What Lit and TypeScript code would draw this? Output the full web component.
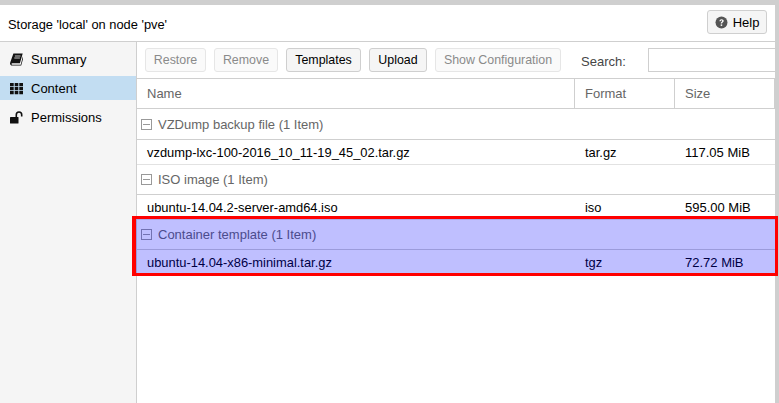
import { LitElement, html, css } from "lit";
import { customElement } from "lit/decorators.js";

const groups = [
  { name: "VZDump backup file (1 Item)", file: "vzdump-lxc-100-2016_10_11-19_45_02.tar.gz", fmt: "tar.gz", size: "117.05 MiB" },
  { name: "ISO image (1 Item)", file: "ubuntu-14.04.2-server-amd64.iso", fmt: "iso", size: "595.00 MiB" },
  { name: "Container template (1 Item)", file: "ubuntu-14.04-x86-minimal.tar.gz", fmt: "tgz", size: "72.72 MiB" },
];

@customElement("app-root")
export class AppRoot extends LitElement {
  static styles = css`
    :host { display: block; width: 779px; height: 403px; background: #cfcfcf; font: 13px "Liberation Sans", Arial, sans-serif; color: #000; overflow: hidden; }
    .win { position: relative; margin: 5px 4px 0 0; height: 398px; background: #fff; display: flex; flex-direction: column; }
    .title { height: 36px; flex: none; display: flex; align-items: center; justify-content: space-between; padding: 0 8px; border-bottom: 1px solid #cfcfcf; }
    .title .t { position: relative; top: 1px; font-size: 12.85px; }
    .btn { box-sizing: border-box; height: 24px; display: flex; align-items: center; justify-content: center; border: 1px solid #cfcfcf; border-radius: 3px; background: #f5f5f5; white-space: nowrap; font-size: 12.4px; }
    .btn.off { color: #8a8a8a; background: #fafafa; border-color: #e6e6e6; }
    .help { width: 60px; gap: 5px; margin-top: -2px; font-size: 13px; }
    .body { flex: 1; display: flex; min-height: 0; }
    .side { width: 136px; flex: none; border-right: 1px solid #cfcfcf; background: #f5f5f5; }
    .nav { height: 24px; margin-bottom: 5px; display: flex; align-items: center; padding-left: 10px; gap: 8px; }
    .nav svg { width: 13px; height: 13px; flex: none; }
    .nav.first { margin-top: 5px; }
    .nav.on { background: #c2ddf2; }
    .main { flex: 1; min-width: 0; }
    .bar { height: 37px; box-sizing: border-box; display: flex; align-items: center; padding-left: 8px; gap: 8px; border-bottom: 1px solid #cfcfcf; }
    .b1 { width: 61px; } .b2 { width: 64px; } .b3 { width: 75px; } .b4 { width: 58px; } .b5 { width: 126px; }
    .lbl { color: #464646; margin-left: 12px; position: relative; top: 1px; }
    .search { box-sizing: border-box; height: 24px; flex: 1; margin-left: 14px; border: 1px solid #cfcfcf; border-right: 0; background: #fff; }
    .cols { display: grid; grid-template-columns: 438px 100px 1fr; height: 29px; border-bottom: 1px solid #cfcfcf; color: #666; }
    .cols div { display: flex; align-items: center; padding-left: 10px; border-right: 1px solid #cfcfcf; }
    .group { height: 30px; box-sizing: border-box; display: flex; align-items: center; padding-left: 4px; gap: 6px; color: #666; border-bottom: 1px solid #cfcfcf; }
    .group.first { margin-top: 1px; }
    .box { box-sizing: border-box; width: 11px; height: 11px; border: 1px solid #999; position: relative; flex: none; }
    .box::after { content: ""; position: absolute; left: 1px; right: 1px; top: 4px; height: 1px; background: #999; }
    .row { display: grid; grid-template-columns: 438px 100px 1fr; height: 25px; box-sizing: border-box; align-items: center; font-size: 12.9px; border-bottom: 1px solid #e2e2e2; }
    .row.last { border-bottom: 0; }
    .row div { padding-left: 10px; }
    .size { font-size: 13px; }
    .hl { position: absolute; left: 132px; top: 211px; width: 639px; height: 54px; border: 3px solid #f00; border-left-width: 4px; background: rgba(0,0,255,.25); pointer-events: none; }
  `;

  render() {
    return html`<div class="win">
      <div class="title"><span class="t">Storage 'local' on node 'pve'</span>
        <div class="btn help"><svg width="13" height="13" viewBox="0 0 13 13"><circle cx="6.500" cy="6.500" r="6" fill="#555"/><path d="M4.400 5.200C4.500 3.900 5.400 3.200 6.600 3.200c1.200 0 2.100.7 2.100 1.800 0 1.400-1.600 1.400-1.600 2.600H5.700c0-1.700 1.500-1.800 1.500-2.600 0-.4-.3-.7-.7-.7-.5 0-.7.4-.8.9z" fill="#fff"/><rect x="5.700" y="8.400" width="1.500" height="1.500" fill="#fff"/></svg>Help</div>
      </div>
      <div class="body">
        <div class="side">
          <div class="nav first"><svg viewBox="0 0 13 13"><path d="M3.400.5h9.300l-2.800 9.800H2.300c-.7 0-1 .5-.8 1 .1.300.4.500.8.500h8.400l2.200-8.200.7.400-2.400 8.500H2c-1.100 0-1.700-.6-1.900-1.500-.1-.5 0-.9.200-1.700z" fill="#111"/><path d="M4.900 3h5.600M4.300 5h5.600" stroke="#ddd" stroke-width=".9"/></svg>Summary</div>
          <div class="nav on"><svg viewBox="0 0 13 13" fill="#111"><path d="M0 1h3.700v3.200H0zM4.700 1h3.600v3.200H4.700zM9.300 1H13v3.200H9.300zM0 5h3.700v3.200H0zM4.700 5h3.600v3.200H4.700zM9.300 5H13v3.200H9.300zM0 9h3.700v3.200H0zM4.700 9h3.600v3.200H4.700zM9.300 9H13v3.200H9.300z"/></svg>Content</div>
          <div class="nav"><svg viewBox="0 0 13 13"><rect x="0" y="6" width="8.500" height="6.500" rx=".6" fill="#111"/><path d="M6.300 6.500V3.700a2.700 2.700 0 0 1 5.400 0v1.800" fill="none" stroke="#111" stroke-width="1.600"/></svg>Permissions</div>
        </div>
        <div class="main">
          <div class="bar">
            <div class="btn off b1">Restore</div><div class="btn off b2">Remove</div><div class="btn b3">Templates</div><div class="btn b4">Upload</div><div class="btn off b5">Show Configuration</div>
            <span class="lbl">Search:</span><div class="search"></div>
          </div>
          <div class="cols"><div>Name</div><div>Format</div><div>Size</div></div>
          ${groups.map((g, i) => html`
            <div class="group ${i === 0 ? "first" : ""}"><span class="box"></span>${g.name}</div>
            <div class="row ${i === 2 ? "last" : ""}"><div>${g.file}</div><div>${g.fmt}</div><div class="size">${g.size}</div></div>`)}
        </div>
      </div>
      <div class="hl"></div>
    </div>`;
  }
}
